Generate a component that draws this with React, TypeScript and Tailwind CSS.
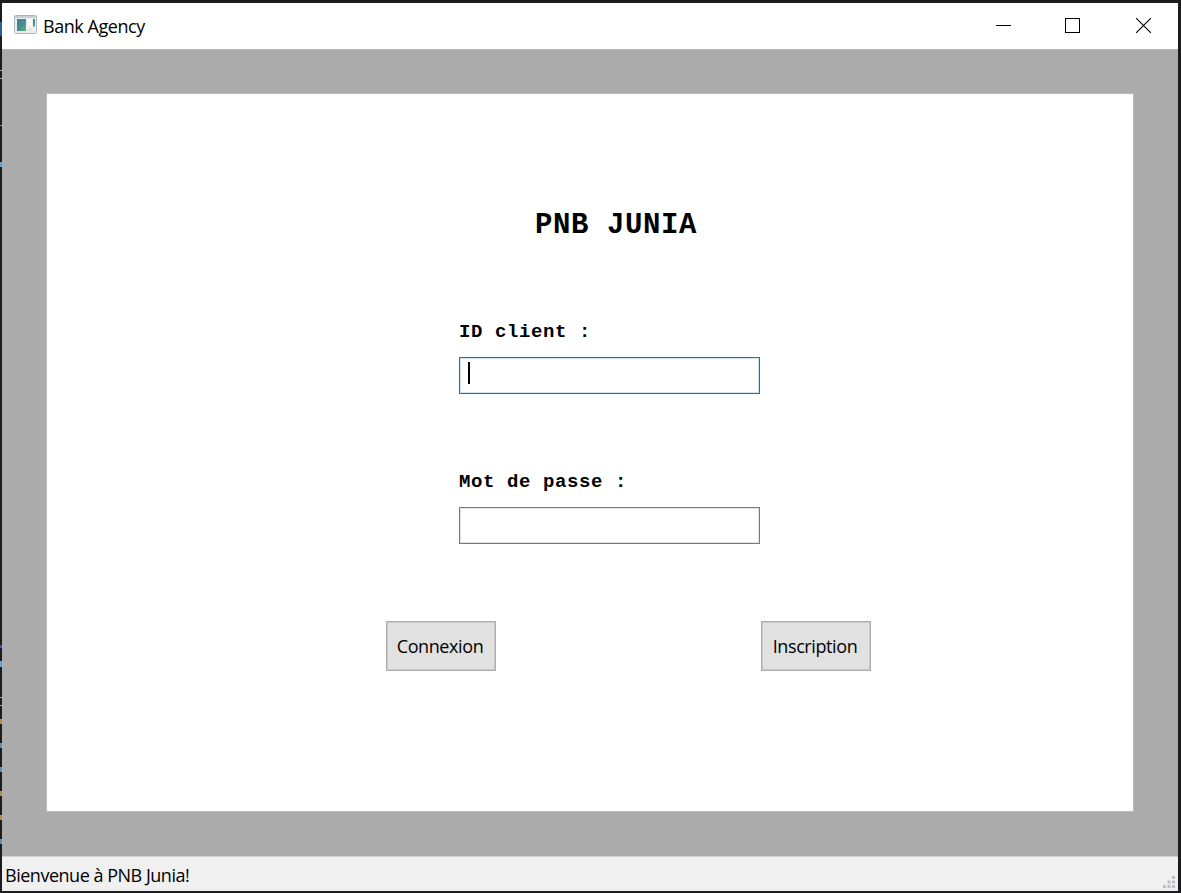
import type { ReactNode } from "react";

const leftSpecks = [
  { y: 22, h: 14, c: "bg-[#27609b]" },
  { y: 70, h: 1, c: "bg-[#a0a0a0]" },
  { y: 78, h: 1, c: "bg-[#a0a0a0]" },
  { y: 125, h: 1, c: "bg-[#a08090]" },
  { y: 162, h: 5, c: "bg-[#63a5d8]" },
  { y: 645, h: 3, c: "bg-[#5746b8]" },
  { y: 661, h: 6, c: "bg-[#63a5d8]" },
  { y: 697, h: 1, c: "bg-[#a8a4c8]" },
  { y: 705, h: 1, c: "bg-[#a8a4c8]" },
  { y: 719, h: 5, c: "bg-[#b58a50]" },
  { y: 743, h: 5, c: "bg-[#5b8fbd]" },
  { y: 767, h: 5, c: "bg-[#5b8fbd]" },
  { y: 791, h: 5, c: "bg-[#b58a50]" },
  { y: 815, h: 5, c: "bg-[#b58a50]" },
  { y: 839, h: 5, c: "bg-[#5b8fbd]" },
];

function AppIcon() {
  return (
    <svg width="23" height="19" viewBox="0 0 23 19" className="shrink-0">
      <defs>
        <linearGradient id="pane" x1="0" y1="0" x2="1" y2="1">
          <stop offset="0" stopColor="#3a7fa4" />
          <stop offset="0.5" stopColor="#438e92" />
          <stop offset="1" stopColor="#63b276" />
        </linearGradient>
      </defs>
      <rect x="0.5" y="0.5" width="22" height="18" rx="1" fill="#edf0f3" stroke="#aeb6bf" />
      <path d="M1 2h21" stroke="#c5ced7" strokeWidth="2" />
      <rect x="3" y="4" width="9" height="12" fill="url(#pane)" />
      <rect x="13.5" y="4" width="4.5" height="7.5" fill="#fafafa" />
      <rect x="13.5" y="13" width="5" height="3" fill="#e3e5e7" />
      <rect x="19" y="4" width="2" height="7.5" fill="url(#pane)" />
    </svg>
  );
}

function TitleBar() {
  return (
    <header className="flex h-[46px] shrink-0 bg-white">
      <div className="flex pl-3 pt-3">
        <AppIcon />
        <span className="-mt-px ml-1.5 h-6 whitespace-nowrap text-[18px] leading-6 tracking-[-0.45px]">
          Bank Agency
        </span>
      </div>
      <div className="ml-auto flex items-start pr-[27px] pt-[15px]">
        <svg width="15" height="15" shapeRendering="crispEdges" className="mr-[54px]">
          <path d="M0 7.5h15" stroke="#000" />
        </svg>
        <svg width="15" height="15" shapeRendering="crispEdges" className="mr-14">
          <rect x="0.5" y="0.5" width="14" height="14" fill="none" stroke="#000" />
        </svg>
        <svg width="15" height="15">
          <path d="M0 0L15 15M15 0L0 15" stroke="#000" strokeWidth="1.1" />
        </svg>
      </div>
    </header>
  );
}

function Label({ children }: { children: ReactNode }) {
  return (
    <div className="h-6 whitespace-pre font-['Liberation_Mono',monospace] text-[19px] font-bold leading-6 tracking-[0.6px]">
      {children}
    </div>
  );
}

function PushButton({ children }: { children: ReactNode }) {
  return (
    <button className="h-[50px] w-[110px] border border-[#adadad] bg-[#e1e1e1] pr-[2px] text-[18px] leading-6 tracking-[-0.4px] shadow-[inset_0_0_0_1px_#c9c9c9]">
      {children}
    </button>
  );
}

function SizeGrip() {
  return (
    <svg width="13" height="13" fill="#bfbfbf" className="mr-[2px] mt-auto mb-[2px]">
      <path d="M9 0h3v3h-3zM4.5 4.5h3v3h-3zM9 4.5h3v3h-3zM0 9h3v3h-3zM4.5 9h3v3h-3zM9 9h3v3h-3z" />
    </svg>
  );
}

export default function App() {
  return (
    <div className="relative flex h-[893px] w-[1181px] flex-col overflow-hidden bg-[#1c1c1e] pb-[2px] pl-[2px] pr-[3px] pt-[3px] font-['Open_Sans','Noto_Sans',sans-serif] text-black">
      {leftSpecks.map((s) => (
        <i key={s.y} className={`absolute left-0 w-[2px] ${s.c}`} style={{ top: s.y, height: s.h }} />
      ))}
      <TitleBar />
      <main className="flex h-[807px] shrink-0 border-t border-[#b5b5b5] bg-[#ababab] pl-[45px] pt-11">
        <section className="h-[717px] w-[1086px] bg-white pt-[114px] shadow-[0_0_0_1px_#b8b8b8]">
          <h1 className="ml-[488px] h-9 whitespace-pre font-['Liberation_Mono',monospace] text-[29px] font-bold leading-9 tracking-[0.6px]">
            PNB JUNIA
          </h1>
          <div className="ml-[412px] mt-[76px] w-[301px]">
            <Label>ID client :</Label>
            <div className="mt-[13px] flex h-[37px] border border-[#0078d7] pl-2 pt-1 shadow-[inset_0_0_0_1px_#cce4f7]">
              <span className="h-[22px] w-[1.5px] bg-black" />
            </div>
            <div className="mt-[76px]">
              <Label>Mot de passe :</Label>
            </div>
            <div className="mt-[13px] h-[37px] border border-[#7a7a7a] shadow-[inset_0_0_0_1px_#e2e2e2]" />
          </div>
          <div className="ml-[339px] mt-[77px] flex w-[485px] justify-between">
            <PushButton>Connexion</PushButton>
            <PushButton>Inscription</PushButton>
          </div>
        </section>
      </main>
      <footer className="flex flex-1 border-t border-[#d2d2d2] bg-[#f0f0f0] pl-[3px]">
        <span className="mt-1.5 h-6 whitespace-nowrap text-[18px] leading-6 tracking-[-0.48px]">
          Bienvenue à PNB Junia!
        </span>
        <div className="ml-auto flex">
          <SizeGrip />
        </div>
      </footer>
    </div>
  );
}
